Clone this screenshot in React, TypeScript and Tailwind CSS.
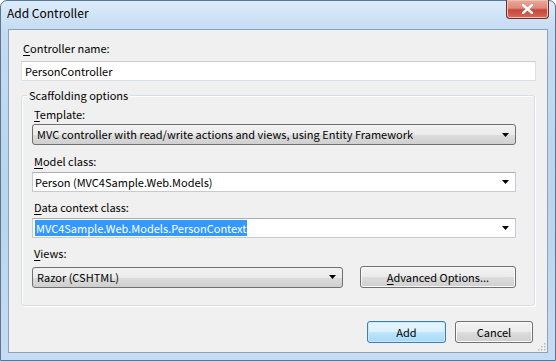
import React from 'react';

const font = { fontFamily: '"Noto Sans CJK KR", "Noto Sans", sans-serif' };

const Arrow = () => (
  <svg width="7" height="4" viewBox="0 0 7 4" className="shrink-0">
    <path d="M0 0H7L3.5 4Z" fill="#000" />
  </svg>
);

const Label = ({ u, rest, className = '' }: { u: string; rest: string; className?: string }) => (
  <div className={`text-[11px] leading-[16px] text-black ${className}`}>
    <span className="underline underline-offset-2">{u}</span>
    {rest}
  </div>
);

const ButtonCombo = ({ text, className = '' }: { text: string; className?: string }) => (
  <div
    className={`flex h-[21px] items-center justify-between rounded-[3px] border border-[#707070] bg-[linear-gradient(#f2f2f2_0%,#ebebeb_50%,#dddddd_51%,#cfcfcf_100%)] pl-[4px] pr-[6px] text-[11px] text-black ${className}`}
  >
    <span>{text}</span>
    <Arrow />
  </div>
);

const EditCombo = ({ children }: { children: React.ReactNode }) => (
  <div className="flex h-[20px] items-center justify-between border border-[#c5cbd3] border-t-[#abadb3] bg-white pl-[2px] pr-[6px] text-[11px] text-black">
    <span className="flex items-center">{children}</span>
    <Arrow />
  </div>
);

const Btn = ({ children, primary = false, className = '' }: { children: React.ReactNode; primary?: boolean; className?: string }) => (
  <div
    className={`flex h-[22px] items-center justify-center rounded-[3px] border text-[11px] text-black ${
      primary
        ? 'border-[#3c7fb1] bg-[linear-gradient(#eaf6fd_0%,#d9f0fc_50%,#bee6fd_51%,#a7d9f5_100%)] shadow-[inset_0_0_0_1px_#c5e9fb]'
        : 'border-[#707070] bg-[linear-gradient(#f2f2f2_0%,#ebebeb_50%,#dddddd_51%,#cfcfcf_100%)] shadow-[inset_0_0_0_1px_#fbfbfb]'
    } ${className}`}
  >
    {children}
  </div>
);

const App: React.FC = () => {
  return (
    <div className="h-[361px] w-[556px] overflow-hidden bg-white" style={font}>
      <div className="relative flex h-full w-full flex-col rounded-t-[7px] border border-[#5a7695] bg-[linear-gradient(#dcebfa_0px,#c4dbf2_30px,#bad4ee_200px,#c6dcf2_361px)] px-[7px] pb-[7px]">
        {/* title bar */}
        <div className="flex h-[28px] shrink-0 items-center text-[12px] text-black">
          <span className="ml-[-1px] mt-[-4px]">Add Controller</span>
        </div>
        <div className="absolute right-[6px] top-[-1px] flex h-[19px] w-[43px] items-center justify-center rounded-b-[4px] border border-t-0 border-[#6e2d2a] bg-[linear-gradient(#e9a99c_0%,#dd8a7a_45%,#c8473a_55%,#d26b5b_100%)] shadow-[inset_0_0_0_1px_#f0bfb5]">
          <svg width="11" height="10" viewBox="0 0 11 10">
            <path d="M1 1L10 9M10 1L1 9" stroke="#fff" strokeWidth="2.4" strokeLinecap="square" />
          </svg>
        </div>

        {/* client */}
        <div className="relative flex flex-1 flex-col border border-[#8ca2bb] bg-[#f0f0f0] pl-[12px] pr-[12px]">
          <Label u="C" rest="ontroller name:" className="ml-[2px] mt-[10px]" />
          <div className="mt-[5px] flex h-[20px] w-[515px] items-center border border-[#dbdfe6] border-t-[#c9ccd2] bg-white pl-[3px] text-[11px] text-black">
            PersonController
          </div>

          {/* group box */}
          <div className="relative mt-[14px] h-[211px] w-[514px] rounded-[3px] border border-[#d5dfe5] shadow-[inset_1px_1px_0_#fff,1px_1px_0_#fff]">
            <div className="absolute left-[5px] top-[-9px] bg-[#f0f0f0] px-[2px] text-[11px] leading-[16px] text-black">
              Scaffolding options
            </div>
            <div className="flex flex-col pl-[10px] pr-[18px] pt-[10px]">
              <Label u="T" rest="emplate:" className="ml-[2px]" />
              <ButtonCombo text="MVC controller with read/write actions and views, using Entity Framework" className="mt-[2px]" />

              <Label u="M" rest="odel class:" className="ml-[2px] mt-[8px]" />
              <div className="mt-[3px]">
                <EditCombo>Person (MVC4Sample.Web.Models)</EditCombo>
              </div>

              <Label u="D" rest="ata context class:" className="ml-[2px] mt-[7px]" />
              <div className="mt-[3px]">
                <EditCombo>
                  <span className="bg-[#3399ff] pl-[1px] pr-[1px] text-white">MVC4Sample.Web.Models.PersonContext</span>
                </EditCombo>
              </div>

              <Label u="V" rest="iews:" className="ml-[2px] mt-[7px]" />
              <div className="mt-[5px] flex items-center justify-between">
                <ButtonCombo text="Razor (CSHTML)" className="w-[311px]" />
                <Btn className="w-[156px]">
                  <span className="underline underline-offset-2">A</span>dvanced Options...
                </Btn>
              </div>
            </div>
          </div>

          <div className="mt-[15px] flex justify-end gap-[9px] pr-[2px]">
            <Btn primary className="w-[79px]">Add</Btn>
            <Btn className="w-[78px]">Cancel</Btn>
          </div>

          {/* size grip */}
          <svg className="absolute bottom-[1px] right-[1px]" width="10" height="10" viewBox="0 0 10 10">
            {[
              [8, 2],
              [8, 5],
              [5, 5],
              [8, 8],
              [5, 8],
              [2, 8],
            ].map(([x, y], i) => (
              <rect key={i} x={x} y={y} width="1.5" height="1.5" fill="#b8bcc2" />
            ))}
          </svg>
        </div>
      </div>
    </div>
  );
};

export default App;
